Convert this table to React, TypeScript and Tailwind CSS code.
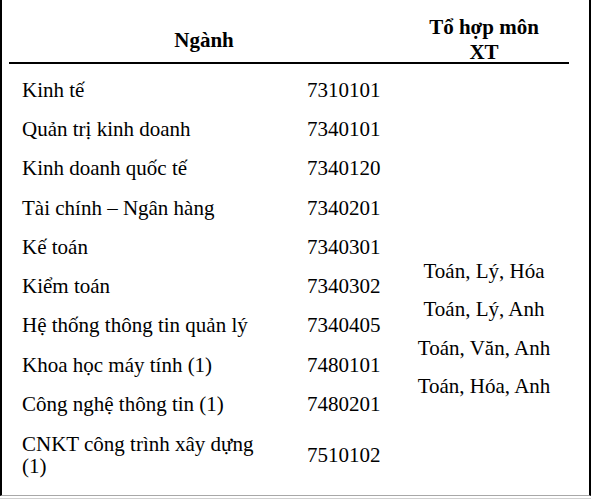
const rows: [string, string][] = [
  ["Kinh tế", "7310101"],
  ["Quản trị kinh doanh", "7340101"],
  ["Kinh doanh quốc tế", "7340120"],
  ["Tài chính – Ngân hàng", "7340201"],
  ["Kế toán", "7340301"],
  ["Kiểm toán", "7340302"],
  ["Hệ thống thông tin quản lý", "7340405"],
  ["Khoa học máy tính (1)", "7480101"],
  ["Công nghệ thông tin (1)", "7480201"],
]

const combos = ["Toán, Lý, Hóa", "Toán, Lý, Anh", "Toán, Văn, Anh", "Toán, Hóa, Anh"]

export default function App() {
  return (
    <div className="w-[592px] h-[501px] bg-white text-black text-[21px] leading-[22px] font-['Liberation_Serif','Times_New_Roman',serif]">
      <div className="w-[591px] h-[496px] border-l-2 border-r-2 border-black border-b border-b-[#a8a8a8] pl-[7px]">
        <div className="w-[560px]">
          {/* header */}
          <div className="flex h-[64px] border-b-2 border-black pt-[17px] font-bold">
            <div className="w-[390px] flex items-center justify-center">Ngành</div>
            <div className="w-[170px] flex flex-col items-center justify-center leading-[25px]">
              <span>Tổ hợp môn</span>
              <span>XT</span>
            </div>
          </div>
          {/* body */}
          <div className="flex pt-[6px]">
            <div className="w-[390px] flex flex-col">
              {rows.map(([name, code]) => (
                <div key={code} className="flex items-center h-[39.3px]">
                  <div className="w-[298px] pl-[13px]">{name}</div>
                  <div className="w-[92px]">{code}</div>
                </div>
              ))}
              <div className="flex items-center h-[63px]">
                <div className="w-[298px] pl-[13px] pr-[28px]">CNKT công trình xây dựng (1)</div>
                <div className="w-[92px]">7510102</div>
              </div>
            </div>
            <div className="w-[170px] flex flex-col items-center pt-[182px]">
              {combos.map((c) => (
                <div key={c} className="h-[38.3px] flex items-center">
                  {c}
                </div>
              ))}
            </div>
          </div>
        </div>
      </div>
      <div className="w-[591px] h-px mt-[2px] bg-[#d0d0d0]" />
    </div>
  )
}
